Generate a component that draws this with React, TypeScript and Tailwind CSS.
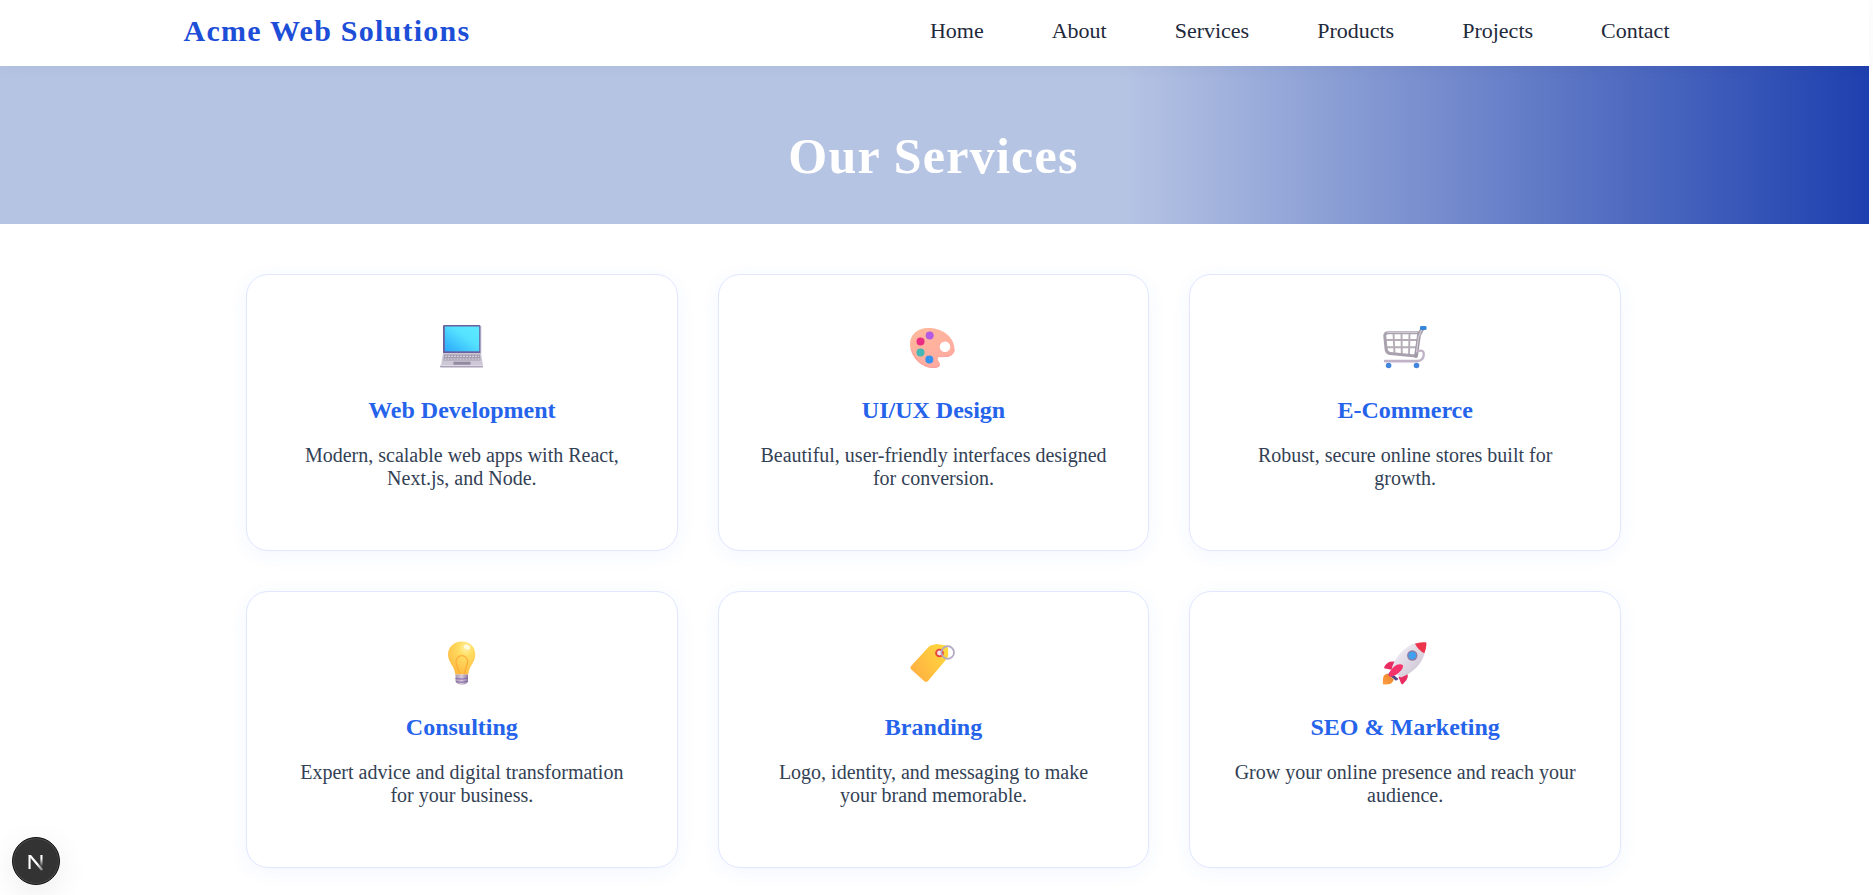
import React from "react";

const Laptop = () => (
  <svg viewBox="0 0 64 60" className="h-[60px] w-16">
    <defs>
      <linearGradient id="screen" x1="0" y1="1" x2="1" y2="0">
        <stop offset="0" stopColor="#2aa8fb" />
        <stop offset=".6" stopColor="#55e2ff" />
        <stop offset="1" stopColor="#5ce9ff" />
      </linearGradient>
    </defs>
    <rect x="13" y="10" width="37.500" height="29" rx="1.400" fill="#6a5f9c" />
    <rect x="50" y="11" width="1.200" height="28" fill="#aaa0c4" />
    <rect x="14.800" y="11.500" width="34.400" height="24.800" fill="url(#screen)" />
    <path d="M13 38h38l2 12.500H11z" fill="#cdc8d6" />
    <path d="M14 39.500h36l.5 6h-37z" fill="#a39cae" />
    <path d="M15 41.300h34M14.500 44h35" stroke="#e4e0ea" strokeWidth="1" strokeDasharray="2 1" />
    <rect x="23.500" y="46.800" width="17" height="3" rx=".5" fill="#928a9f" />
    <path d="M10 50h43v1.500q0 1-1 1H11q-1 0-1-1z" fill="#aba4b9" />
    <path d="M10 50h43v1H10z" fill="#ded9e6" />
  </svg>
);

const Palette = () => (
  <svg viewBox="0 0 64 60" className="h-[60px] w-16">
    <defs>
      <linearGradient id="board" x1="0" y1="0" x2=".6" y2="1">
        <stop offset="0" stopColor="#ffba9c" />
        <stop offset="1" stopColor="#ffaaa0" />
      </linearGradient>
    </defs>
    <path fillRule="evenodd" d="M27 13C16 13 9 20 9 29c0 12 10 23 22 24 5 .5 8.500-1 8-4-.5-2.500-3-4-2-6 1-1.500 5-1 9-1.200 5-.3 8-4 7.500-8.500C52.500 21 41 13 27 13zm17 13.500a5.300 5.300 0 1 1 0 10.600 5.300 5.300 0 0 1 0-10.600z" fill="url(#board)" />
    <path d="M10.500 34c3 10 11 18 20.500 18.300 4 .3 6.500-.6 7.200-2.500M39 41.600c6 .4 13.500.2 14.200-7" fill="none" stroke="#f79b9a" strokeWidth=".8" />
    <circle cx="28.700" cy="20.500" r="4" fill="#b35be6" />
    <circle cx="19.500" cy="26.600" r="4" fill="#e92e83" />
    <circle cx="19.500" cy="37.400" r="4" fill="#43b7b5" />
    <circle cx="28.300" cy="44.500" r="4" fill="#3491ee" />
  </svg>
);

const Cart = () => (
  <svg viewBox="0 0 64 60" className="h-[60px] w-16" fill="none" strokeLinejoin="round" strokeLinecap="round">
    <path d="M14 25h31M14 32.300h30M20.500 18l1 21M28.500 18l.3 22M36.500 18l-.5 22" stroke="#b4adb8" strokeWidth="1.900" />
    <path d="M45 17.800H15q-3.500 0-3.200 3.500l1.300 13q.5 3.800 4 4.200L42.500 41" stroke="#a9a2ae" strokeWidth="3" />
    <path d="M14.500 17.500H44" stroke="#cfc9d3" strokeWidth="1" />
    <path d="M49.500 13.500L46 20l-3 21" stroke="#a19aa7" strokeWidth="3.800" />
    <path d="M49 14l-3.500 8-2 15" stroke="#d2ccd5" strokeWidth="1.200" />
    <path d="M45 36q6-1.500 5.800 3.200-.3 6.300-6.300 6.800H12" stroke="#c0b3c8" strokeWidth="2.400" />
    <path d="M12 47.600h32" stroke="#e0d6e5" strokeWidth="1" />
    <rect x="47" y="11" width="6.500" height="4" rx="1.200" fill="#3686dc" />
    <circle cx="15.600" cy="50.500" r="2.800" fill="#4286db" />
    <circle cx="43.500" cy="50.500" r="2.800" fill="#4286db" />
  </svg>
);

const Bulb = () => (
  <svg viewBox="0 0 64 60" className="h-[60px] w-16">
    <defs>
      <radialGradient id="glass" cx=".65" cy=".2" r=".85">
        <stop offset="0" stopColor="#fff2a6" />
        <stop offset=".3" stopColor="#ffdd62" />
        <stop offset="1" stopColor="#ffb83f" />
      </radialGradient>
      <linearGradient id="metal">
        <stop offset="0" stopColor="#a999b1" />
        <stop offset=".5" stopColor="#d6c8da" />
        <stop offset="1" stopColor="#8e7b9f" />
      </linearGradient>
    </defs>
    <path d="M32 9.500c-8.500 0-14 6-14 13 0 8 6.500 11 7.300 20h13c.7-9 7-12 7-20 0-7-5-13-13.300-13z" fill="url(#glass)" />
    <path d="M29.500 42.500c-.5-5-3.500-8.500-3.500-13a5.800 5.800 0 0 1 11.600 0c0 4.500-3 8-3.300 13" fill="none" stroke="#ffad3a" strokeWidth="1.300" />
    <ellipse cx="37" cy="15" rx="3.300" ry="2.200" fill="#fffbe1" transform="rotate(25 37 15)" />
    <path d="M25.500 42.500H38v7q-1 3-6 3.200-5.500-.2-6.500-3.200z" fill="url(#metal)" />
    <path d="M25.500 46.500q7 1.500 12.500-.5M26 49.700q6 1.300 11.500-.3" fill="none" stroke="#8064a7" strokeWidth="1" />
  </svg>
);

const Tag = () => (
  <svg viewBox="0 0 64 60" className="h-[60px] w-16">
    <defs>
      <linearGradient id="label" x1="1" y1=".2" x2="0" y2=".8">
        <stop offset="0" stopColor="#ffd83d" />
        <stop offset="1" stopColor="#ffae43" />
      </linearGradient>
    </defs>
    <path d="M37 12.200l7 1q2.600.4 3 3l.3 6.800q0 2-1.300 3.400L27 48.900q-1.800 2-3.700.3L10.300 37.500q-1.900-1.800-.2-3.600L27.500 15q1-1 2.300-1.400l4.500-1.300q1.500-.3 2.700-.1z" fill="url(#label)" />
    <circle cx="38.500" cy="21" r="3.400" fill="#f2e4e9" stroke="#e8433d" strokeWidth="1.900" />
    <circle cx="46.700" cy="20.500" r="6.300" fill="none" stroke="#b1a5c4" strokeWidth="1.700" />
  </svg>
);

const Rocket = () => (
  <svg viewBox="0 0 64 60" className="h-[60px] w-16">
    <defs>
      <linearGradient id="body" x1="0" y1="0" x2="1" y2="1">
        <stop offset=".2" stopColor="#eeeaf2" />
        <stop offset="1" stopColor="#c9bdcd" />
      </linearGradient>
      <linearGradient id="flame" x1="0" y1="1" x2="1" y2="0">
        <stop offset="0" stopColor="#ff9f45" />
        <stop offset="1" stopColor="#e98327" />
      </linearGradient>
    </defs>
    <path d="M14.500 41.500q-4 1-4.500 5l-.2 5q0 1 1 1l5-.3q3.500-.5 5-4.700z" fill="url(#flame)" />
    <path d="M23 29.700q-6-.7-8.500 1.300-2.500 2-3.300 4-.4 1.500 1 1.500l6.300 1.200zM34.500 41q1 4-1 7l-3.500 4q-1.500 1-2-.7L25.500 45z" fill="#e92d63" />
    <path d="M17 40l8.500 7-2.500 1.800-8-6.500z" fill="#50478b" />
    <path d="M18.500 38c2-12 13-23.500 25-27.500l8.500 9.500c-3 12.500-12 20.500-24 25.500z" fill="url(#body)" />
    <path d="M42 11.700q5-2 10.200-1.400 1.300 0 1.300 1.400-.2 5-2.200 9.500-6-3-9.300-9.500z" fill="#ed344d" />
    <circle cx="39.300" cy="23.500" r="5.200" fill="#8d7ca5" />
    <circle cx="39.300" cy="23.500" r="3.800" fill="#3fa0ef" />
    <path d="M28.500 32.500q-4-.8-7.500 2.200-4.500 4-5.200 7.500-.3 3 2.700 2.600 3.500-.5 7.500-4.300 4-3.500 4-6.500 0-1.300-1.500-1.500z" fill="#f5326a" />
  </svg>
);

const services = [
  { title: "Web Development", text: "Modern, scalable web apps with React, Next.js, and Node.", Icon: Laptop },
  { title: "UI/UX Design", text: "Beautiful, user-friendly interfaces designed for conversion.", Icon: Palette },
  { title: "E-Commerce", text: "Robust, secure online stores built for growth.", Icon: Cart },
  { title: "Consulting", text: "Expert advice and digital transformation for your business.", Icon: Bulb },
  { title: "Branding", text: "Logo, identity, and messaging to make your brand memorable.", Icon: Tag },
  { title: "SEO & Marketing", text: "Grow your online presence and reach your audience.", Icon: Rocket },
];

const links = ["Home", "About", "Services", "Products", "Projects", "Contact"];

export default function App() {
  return (
    <div className="h-[895px] overflow-hidden bg-white pr-1 font-['Liberation_Serif','Times_New_Roman',serif]">
      <header className="relative flex h-[66px] items-center justify-between bg-white pr-[199.500px] pb-1 pl-[183.500px] shadow-[0_2px_16px_rgba(0,0,0,0.04)]">
        <span className="text-[30px] leading-none font-bold tracking-[1.25px] text-[#1d4ed8]">Acme Web Solutions</span>
        <nav className="flex gap-[68px] text-[22px] leading-none text-[#1e293b]">
          {links.map((l) => (
            <a key={l} href="#">{l}</a>
          ))}
        </nav>
      </header>
      <section className="flex h-[158px] items-center justify-center bg-[linear-gradient(90deg,#b6c4e4_60%,#1e40af_100%)] pt-[21px] pr-[2px]">
        <h1 className="text-[50px] leading-none font-bold tracking-[1.25px] text-white">Our Services</h1>
      </section>
      <main className="mt-[50px] ml-[246px] grid w-[1375px] grid-cols-3 gap-10">
        {services.map(({ title, text, Icon }) => (
          <article key={title} className="flex h-[277px] flex-col items-center rounded-[22px] border border-[#e0e7ff] bg-white px-10 pt-10 text-center shadow-[0_4px_20px_rgba(37,99,235,0.06)]">
            <Icon />
            <h2 className="mt-[21px] text-[24px] leading-7 font-bold text-[#2563eb]">{title}</h2>
            <p className="mt-[19.5px] text-[20px] leading-[23px] text-[#334155]">{text}</p>
          </article>
        ))}
      </main>
      <div className="fixed bottom-[10px] left-[11.5px] flex size-12 items-center justify-center rounded-full border-[1.5px] border-[#111] bg-[#333] shadow-[inset_0_0_0_1px_#4a4a4a,0_8px_32px_rgba(0,0,0,0.08)]">
        <svg viewBox="0 0 16 20" className="h-5 w-4">
          <defs>
            <linearGradient id="fadeBar" gradientUnits="userSpaceOnUse" x1="0" y1="4" x2="0" y2="16">
              <stop offset=".3" stopColor="#fff" />
              <stop offset="1" stopColor="#fff" stopOpacity="0" />
            </linearGradient>
            <linearGradient id="fadeDiagonal" gradientUnits="userSpaceOnUse" x1="9" y1="13" x2="15" y2="20">
              <stop offset="0" stopColor="#fff" />
              <stop offset="1" stopColor="#fff" stopOpacity=".3" />
            </linearGradient>
          </defs>
          <path d="M.5 4h2.100v14H.5z" fill="#fff" />
          <path d="M.5 4h2.500L15.200 18.500l-1.900 1.300L1.800 6z" fill="url(#fadeDiagonal)" />
          <path d="M12.400 4h2.100v12h-2.100z" fill="url(#fadeBar)" />
        </svg>
      </div>
    </div>
  );
}
